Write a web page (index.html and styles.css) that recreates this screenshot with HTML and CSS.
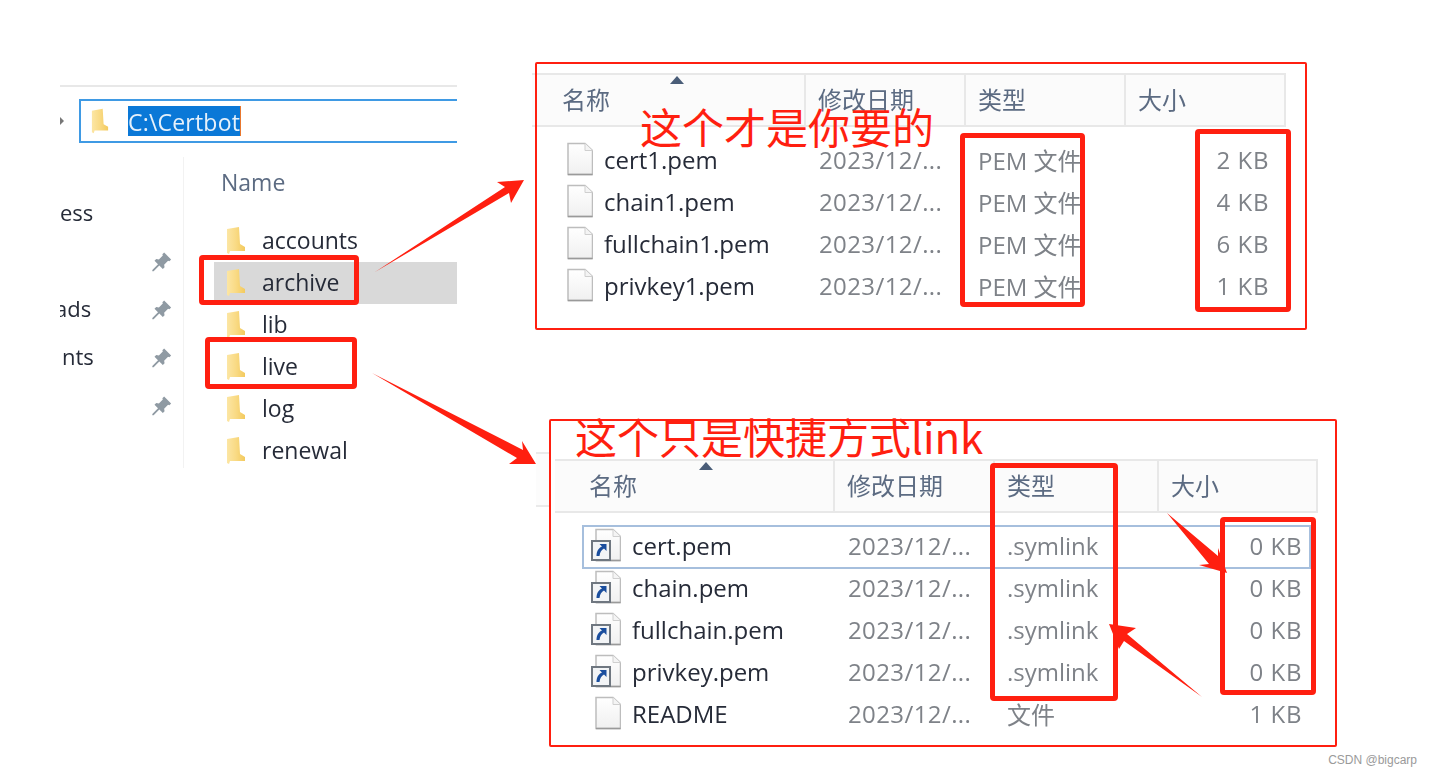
FILE: index.html

```html
<!DOCTYPE html>
<html lang="zh">
<head>
    <meta charset="UTF-8">
    <title>Certbot</title>
    <link rel="stylesheet" href="styles.css">
</head>
<body>
    <svg class="defs" aria-hidden="true">
        <defs>
            <linearGradient id="folder-fill" x1="0" y1="0" x2="1" y2="0">
                <stop offset="0" stop-color="#fce6a4"/>
                <stop offset="0.5" stop-color="#f9da84"/>
                <stop offset="1" stop-color="#f3ca5e"/>
            </linearGradient>
            <linearGradient id="page-fill" x1="0" y1="0" x2="0" y2="1">
                <stop offset="0" stop-color="#ffffff"/>
                <stop offset="1" stop-color="#f0f0f0"/>
            </linearGradient>
            <symbol id="folder" viewBox="0 0 20 27">
                <path d="M1 2 L13 0 L14 17 L19 20 L19 24 L4 24 L3 27 L1 26 Z" fill="url(#folder-fill)"/>
            </symbol>
            <symbol id="pin" viewBox="0 0 24 24">
                <path d="M15 1 L23 9 L21 11 L19.5 10.5 L15 15 L15.5 18 L13.5 20 L9.5 16 L3 22.5 L1.5 22.5 L1.5 21 L8 14.5 L4 10.5 L6 8.500 L9 9 L13.500 4.500 L13 3 Z" fill="#8f9aa3"/>
            </symbol>
            <symbol id="page" viewBox="0 0 30 34">
                <path d="M5 1.500 H22 L29.500 8.500 V32.500 H5 Z" fill="url(#page-fill)" stroke="#bdbdbd" stroke-width="1.500"/>
                <path d="M22 1.500 V8.500 H29.500" fill="#f4f4f4" stroke="#cfcfcf"/>
                <path d="M5 32.500 H29.500" stroke="#9a9a9a" stroke-width="1.500"/>
            </symbol>
            <symbol id="link" viewBox="0 0 30 34">
                <use href="#page" width="30" height="34"/>
                <rect x="1" y="13" width="18" height="19" fill="#f2f4f6" stroke="#6f7780" stroke-width="2"/>
                <path d="M15.500 16 V23 L13 20.500 C10.500 22 9 24 8.500 28 L5.500 28 C5.500 23 8 19.500 11 18.500 L8.500 16 Z" fill="#1a4e9e"/>
            </symbol>
        </defs>
    </svg>

    <main class="stage">
        <section class="explorer">
            <div class="addr-row">
                <span class="caret"></span>
                <div class="addr">
                    <svg class="addr-icon"><use href="#folder"/></svg>
                    <span class="addr-text">C:\Certbot</span>
                </div>
            </div>
            <div class="explorer-body">
                <nav class="nav">
                    <div class="nav-row"><span>ess</span></div>
                    <div class="nav-row"><span></span><svg class="pin"><use href="#pin"/></svg></div>
                    <div class="nav-row"><span class="clip-a">ads</span><svg class="pin"><use href="#pin"/></svg></div>
                    <div class="nav-row"><span class="clip-b">nts</span><svg class="pin"><use href="#pin"/></svg></div>
                    <div class="nav-row"><span></span><svg class="pin"><use href="#pin"/></svg></div>
                </nav>
                <div class="folders">
                    <div class="folders-head">Name</div>
                    <div class="folder-row"><svg class="folder-icon"><use href="#folder"/></svg>accounts</div>
                    <div class="folder-row is-hover"><svg class="folder-icon"><use href="#folder"/></svg>archive</div>
                    <div class="folder-row"><svg class="folder-icon"><use href="#folder"/></svg>lib</div>
                    <div class="folder-row"><svg class="folder-icon"><use href="#folder"/></svg>live</div>
                    <div class="folder-row"><svg class="folder-icon"><use href="#folder"/></svg>log</div>
                    <div class="folder-row"><svg class="folder-icon"><use href="#folder"/></svg>renewal</div>
                </div>
            </div>
        </section>

        <div class="ghost ghost-top"></div>
        <div class="ghost ghost-bottom"></div>

        <section class="win win-top">
            <div class="head">
                <div class="head-cell first">名称<span class="sort"></span></div>
                <div class="head-cell">修改日期</div>
                <div class="head-cell">类型</div>
                <div class="head-cell">大小</div>
            </div>
            <div class="rows">
                <div class="row"><div class="name"><svg class="file-icon"><use href="#page"/></svg>cert1.pem</div><div class="date">2023/12/...</div><div class="type">PEM 文件</div><div class="size">2 KB</div></div>
                <div class="row"><div class="name"><svg class="file-icon"><use href="#page"/></svg>chain1.pem</div><div class="date">2023/12/...</div><div class="type">PEM 文件</div><div class="size">4 KB</div></div>
                <div class="row"><div class="name"><svg class="file-icon"><use href="#page"/></svg>fullchain1.pem</div><div class="date">2023/12/...</div><div class="type">PEM 文件</div><div class="size">6 KB</div></div>
                <div class="row"><div class="name"><svg class="file-icon"><use href="#page"/></svg>privkey1.pem</div><div class="date">2023/12/...</div><div class="type">PEM 文件</div><div class="size">1 KB</div></div>
            </div>
        </section>

        <section class="win win-bottom">
            <div class="head">
                <div class="head-cell first">名称<span class="sort"></span></div>
                <div class="head-cell">修改日期</div>
                <div class="head-cell">类型</div>
                <div class="head-cell">大小</div>
            </div>
            <div class="rows">
                <div class="row is-focus"><div class="name"><svg class="file-icon"><use href="#link"/></svg>cert.pem</div><div class="date">2023/12/...</div><div class="type">.symlink</div><div class="size">0 KB</div></div>
                <div class="row"><div class="name"><svg class="file-icon"><use href="#link"/></svg>chain.pem</div><div class="date">2023/12/...</div><div class="type">.symlink</div><div class="size">0 KB</div></div>
                <div class="row"><div class="name"><svg class="file-icon"><use href="#link"/></svg>fullchain.pem</div><div class="date">2023/12/...</div><div class="type">.symlink</div><div class="size">0 KB</div></div>
                <div class="row"><div class="name"><svg class="file-icon"><use href="#link"/></svg>privkey.pem</div><div class="date">2023/12/...</div><div class="type">.symlink</div><div class="size">0 KB</div></div>
                <div class="row"><div class="name"><svg class="file-icon"><use href="#page"/></svg>README</div><div class="date">2023/12/...</div><div class="type">文件</div><div class="size">1 KB</div></div>
            </div>
        </section>

        <!-- red marks drawn over the screenshot -->
        <div class="mark mark-archive"></div>
        <div class="mark mark-live"></div>
        <div class="mark mark-pem"></div>
        <div class="mark mark-kb"></div>
        <div class="mark mark-type"></div>
        <div class="mark mark-zero"></div>

        <div class="note note-top">这个才是你要的</div>
        <div class="note note-bottom">这个只是快捷方式link</div>

        <svg class="arrows" viewBox="0 0 1431 777">
            <polygon points="375,272 505,187 497,182 524,180 511,203 509,193"/>
            <polygon points="372,373 523,450 522,441 536,464 509,464 517,458"/>
            <polygon points="1167,513 1218,556 1218,548 1227,573 1199,565 1209,564"/>
            <polygon points="1202,697 1124,641 1119,649 1109,624 1136,628 1127,634"/>
        </svg>

        <div class="watermark">CSDN @bigcarp</div>
    </main>
</body>
</html>
```

FILE: styles.css

```css
* {
    box-sizing: border-box;
}

body {
    margin: 0;
    background: #fff;
    font-family: "Open Sans", "Noto Sans CJK SC", sans-serif;
    overflow: hidden;
}

.defs {
    position: absolute;
    width: 0;
    height: 0;
}

.stage {
    position: relative;
    width: 1431px;
    height: 777px;
    overflow: hidden;
}

/* left explorer crop */
.explorer {
    position: absolute;
    left: 60px;
    top: 85px;
    width: 397px;
    height: 385px;
    overflow: hidden;
    border-top: 2px solid #e8e8e8;
    filter: blur(0.6px);
}

.addr-row {
    display: flex;
    align-items: center;
    margin-top: 12px;
    height: 44px;
}

.caret {
    width: 0;
    height: 0;
    border-left: 4px solid #777;
    border-top: 4px solid transparent;
    border-bottom: 4px solid transparent;
    margin-right: 15px;
}

.addr {
    display: flex;
    align-items: center;
    flex: none;
    width: 420px;
    height: 44px;
    border: 2px solid #3f9ae4;
    padding-left: 10px;
}

.addr-icon {
    width: 18px;
    height: 26px;
    margin-right: 19px;
}

.addr-text {
    background: #0a78d7;
    color: #e6f1fb;
    font-size: 23px;
    letter-spacing: 0.2px;
    line-height: 32px;
    height: 30px;
    border-right: 1px solid #e8772e;
}

.explorer-body {
    display: flex;
    margin-top: 14px;
    height: 311px;
}

.nav {
    flex: none;
    width: 124px;
    padding-top: 33px;
    border-right: 1px solid #f2f2f2;
}

.nav-row {
    display: flex;
    align-items: center;
    justify-content: space-between;
    height: 48px;
    padding-right: 11px;
    font-size: 22px;
    color: #262b38;
}

.nav-row span {
    margin-top: -4px;
}

.nav-row .clip-a {
    margin-left: -5px;
}

.nav-row .clip-b {
    margin-left: 2px;
}

.pin {
    width: 21px;
    height: 22px;
}

.folders {
    flex: 1;
    min-width: 0;
}

.folders-head {
    height: 52px;
    line-height: 50px;
    padding-left: 37px;
    margin-bottom: 11px;
    font-size: 23px;
    color: #5c6b82;
}

.folder-row {
    display: flex;
    align-items: center;
    height: 42px;
    margin-left: 30px;
    padding: 0 0 2px 12px;
    font-size: 23px;
    color: #262b38;
}

.folder-row.is-hover {
    background: #d9d9d9;
}

.folder-icon {
    width: 20px;
    height: 27px;
    margin-right: 16px;
}

/* file list windows */
.win {
    position: absolute;
    border: 2px solid #ff1f10;
    border-radius: 2px;
}

.win-top {
    left: 535px;
    top: 62px;
    width: 772px;
    height: 268px;
    padding-top: 9px;
}

.win-bottom {
    left: 549px;
    top: 419px;
    width: 788px;
    height: 328px;
    padding: 38px 0 0 4px;
}

.head {
    display: grid;
    height: 54px;
    background: #fbfbfb;
    border: solid #e8e8e8;
    border-width: 2px 2px 2px 0;
    filter: blur(0.5px);
}

.win-top .head {
    grid-template-columns: 269px 160px 160px 158px;
    width: 749px;
}

.win-bottom .head {
    grid-template-columns: 280px 160px 164px 157px;
    width: 763px;
}

.head-cell {
    position: relative;
    display: flex;
    align-items: center;
    padding: 0 0 3px 12px;
    font-size: 24px;
    color: #5c6b82;
    border-right: 2px solid #e8e8e8;
}

.head-cell:last-child {
    border-right: 0;
}

.head-cell.first {
    padding-left: 25px;
}

.win-bottom .head-cell.first {
    padding-left: 34px;
}

/* little triangle above the column title */
.sort {
    position: absolute;
    top: 1px;
    width: 0;
    height: 0;
    border-left: 7px solid transparent;
    border-right: 7px solid transparent;
    border-bottom: 8px solid #4a5d78;
}

.win-top .sort {
    left: 133px;
}

.win-bottom .sort {
    left: 144px;
}

.rows {
    filter: blur(0.6px);
    font-size: 24px;
    color: #7e8288;
}

.win-top .rows {
    margin: 12px 0 0 22px;
    width: 714px;
}

.win-bottom .rows {
    margin: 13px 0 0 28px;
    width: 727px;
}

.row {
    display: grid;
    align-items: center;
    height: 42px;
    padding-bottom: 2px;
}

.win-top .row {
    grid-template-columns: 246px 160px 160px 148px;
}

.win-bottom .row {
    grid-template-columns: 251px 160px 164px 152px;
    padding-bottom: 4px;
}

.row.is-focus {
    outline: 2px solid #a6bfdd;
    outline-offset: -1px;
}

.name {
    display: flex;
    align-items: center;
    padding-left: 4px;
    color: #262b38;
    white-space: nowrap;
}

.win-bottom .name {
    padding-left: 8px;
}

.file-icon {
    width: 30px;
    height: 34px;
    margin-right: 11px;
    flex: none;
}

.date {
    padding-left: 14px;
    letter-spacing: 0.4px;
    white-space: nowrap;
}

.type {
    padding-left: 13px;
    white-space: nowrap;
}

.size {
    text-align: right;
    padding-right: 8px;
    letter-spacing: 0.6px;
    white-space: nowrap;
}

.win-top .size {
    padding-right: 4px;
}

/* bits of the window behind the crops */
.ghost {
    position: absolute;
    background: #fcfcfc;
    border: solid #eaeaea;
    border-width: 2px 0;
}

.ghost-top {
    left: 532px;
    top: 73px;
    width: 4px;
    height: 54px;
}

.ghost-bottom {
    left: 536px;
    top: 452px;
    width: 14px;
    height: 55px;
}

/* annotations */
.mark {
    position: absolute;
    border: 5px solid #ff1f10;
    border-radius: 4px;
}

.mark-archive {
    left: 199px;
    top: 255px;
    width: 160px;
    height: 50px;
}

.mark-live {
    left: 205px;
    top: 337px;
    width: 152px;
    height: 52px;
}

.mark-pem {
    left: 960px;
    top: 133px;
    width: 125px;
    height: 174px;
}

.mark-kb {
    left: 1195px;
    top: 129px;
    width: 96px;
    height: 183px;
}

.mark-type {
    left: 990px;
    top: 463px;
    width: 128px;
    height: 238px;
}

.mark-zero {
    left: 1220px;
    top: 517px;
    width: 96px;
    height: 178px;
}

.note {
    position: absolute;
    font-size: 42px;
    line-height: 46px;
    color: #ff1f10;
    font-family: "Noto Sans CJK SC", "Open Sans", sans-serif;
    white-space: nowrap;
}

.note-top {
    left: 640px;
    top: 103px;
}

.note-bottom {
    left: 575px;
    top: 413px;
}

.arrows {
    position: absolute;
    left: 0;
    top: 0;
    width: 1431px;
    height: 777px;
    fill: #ff1f10;
    pointer-events: none;
}

.watermark {
    position: absolute;
    right: 14px;
    bottom: 9px;
    font-family: "Liberation Sans", sans-serif;
    font-size: 12px;
    line-height: 16px;
    color: #9a9a9a;
}
```
